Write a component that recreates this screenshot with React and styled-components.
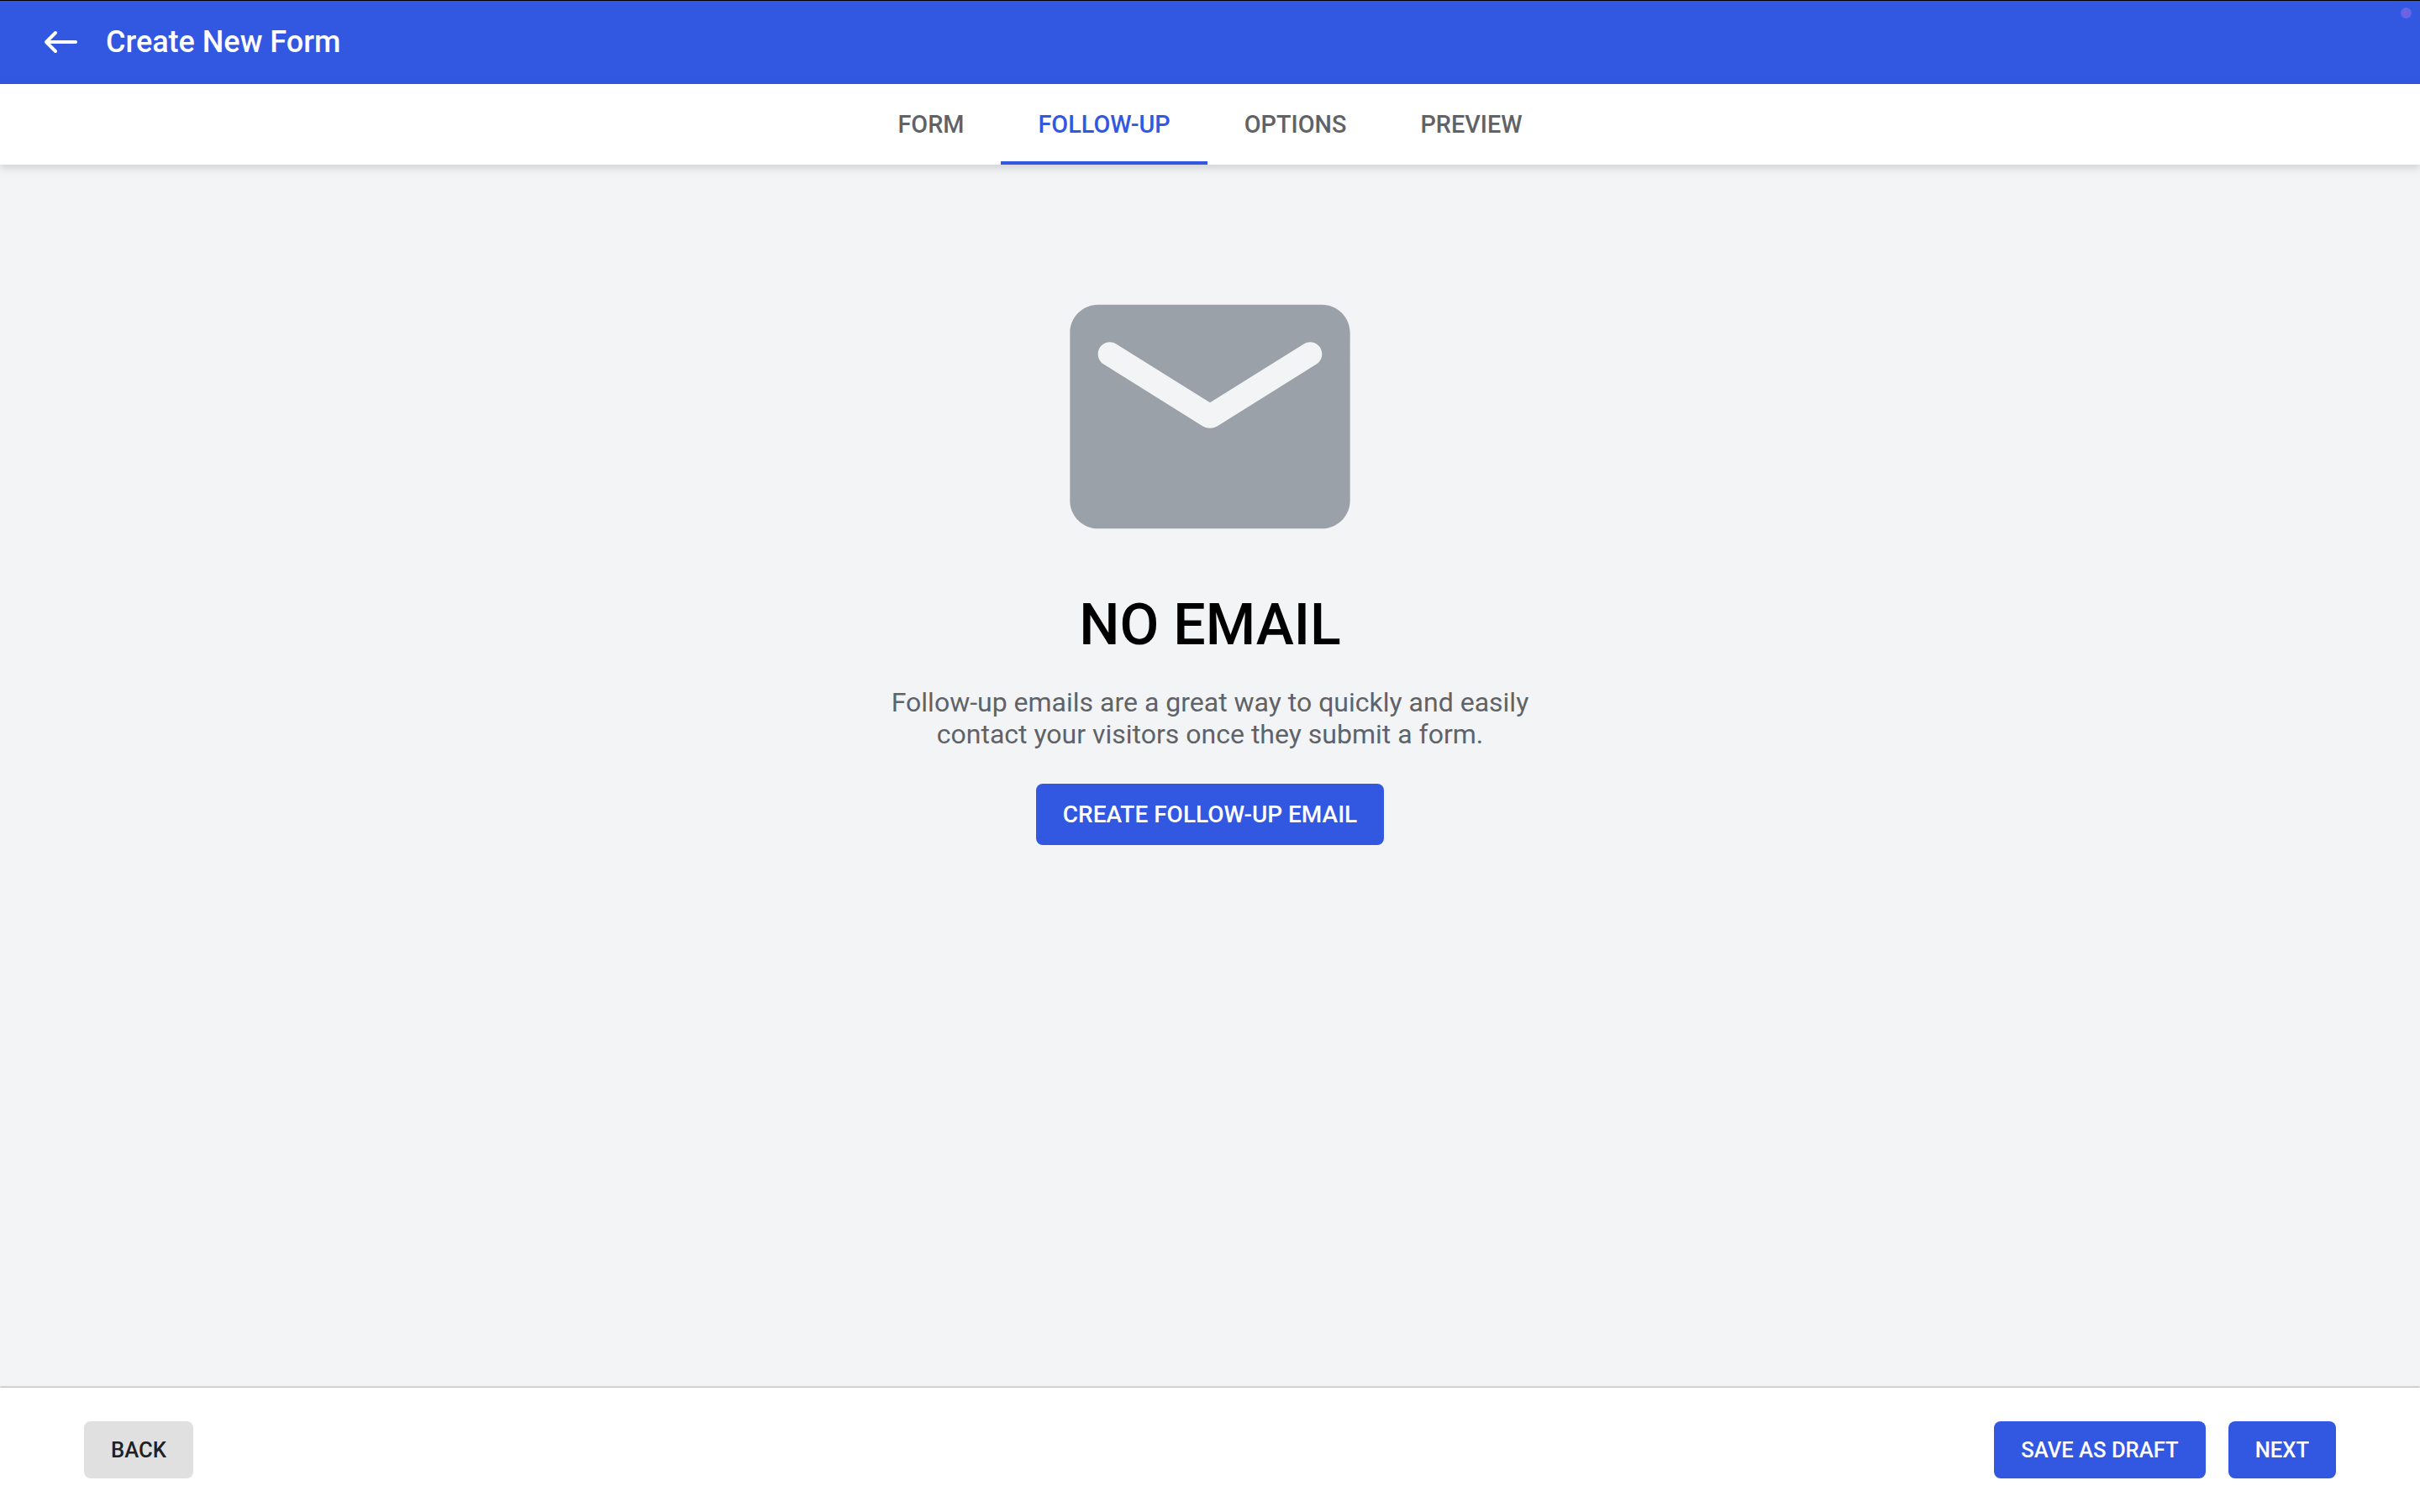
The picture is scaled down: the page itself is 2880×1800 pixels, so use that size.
import React, { useState } from 'react';
import styled, { createGlobalStyle } from 'styled-components';

const TABS = ['Form', 'Follow-up', 'Options', 'Preview'];

const App = () => {
  const [activeTab, setActiveTab] = useState('Follow-up');

  return (
    <>
      <GlobalStyle />
      <Page>
        <Header>
          <BackArrow viewBox="0 0 40 28">
            <path d="M14 3L3 14L14 25M3.5 14H38" />
          </BackArrow>
          <HeaderTitle>Create New Form</HeaderTitle>
          <StatusDot />
        </Header>
        <TabBar>
          {TABS.map(tab => (
            <Tab
              key={tab}
              $active={tab === activeTab}
              onClick={() => setActiveTab(tab)}
            >
              {tab}
            </Tab>
          ))}
        </TabBar>
        <Content>
          <MailIcon viewBox="0 0 24 24">
            <path d="M20 4H4c-1.1 0-2 .9-2 2v12c0 1.1.9 2 2 2h16c1.1 0 2-.9 2-2V6c0-1.1-.9-2-2-2zm-.4 4.25l-7.07 4.42c-.32.2-.74.2-1.06 0L4.4 8.25c-.25-.16-.4-.43-.4-.72 0-.67.73-1.07 1.3-.72L12 11l6.7-4.19c.57-.35 1.3.05 1.3.72 0 .29-.15.56-.4.72z" />
          </MailIcon>
          <EmptyTitle>No Email</EmptyTitle>
          <EmptyText>
            Follow-up emails are a great way to quickly and easily
            <br />
            contact your visitors once they submit a form.
          </EmptyText>
          <Button $large>Create Follow-up Email</Button>
        </Content>
        <Footer>
          <Button $secondary>Back</Button>
          <FooterActions>
            <Button>Save as Draft</Button>
            <Button>Next</Button>
          </FooterActions>
        </Footer>
      </Page>
    </>
  );
};
export default App;

const GlobalStyle = createGlobalStyle`
  * {
    box-sizing: border-box;
  }

  body {
    margin: 0;
    font-family: Roboto, sans-serif;
    background-color: #f3f4f6;
  }
`;

const Page = styled.div`
  display: flex;
  flex-direction: column;
  height: 100vh;
  overflow: hidden;
`;

const Header = styled.header`
  position: relative;
  display: flex;
  align-items: center;
  gap: 34px;
  height: 100px;
  padding: 0 52px 1px;
  border-top: 1px solid #000;
  background-color: #3257e0;
`;

const BackArrow = styled.svg`
  width: 40px;
  height: 28px;
  fill: none;
  stroke: #fff;
  stroke-width: 4;
  stroke-linecap: round;
  stroke-linejoin: round;
`;

const HeaderTitle = styled.h1`
  margin: 0;
  color: #fff;
  font-size: 36px;
  font-weight: 500;
  line-height: 42px;
`;

const StatusDot = styled.span`
  position: absolute;
  top: 8px;
  right: 10px;
  width: 13px;
  height: 13px;
  border-radius: 50%;
  background-color: #6a63e6;
`;

const TabBar = styled.nav`
  position: relative;
  z-index: 1;
  display: flex;
  justify-content: center;
  height: 96px;
  background-color: #fff;
  box-shadow: 0 4px 10px rgba(0, 0, 0, 0.15);
`;

const Tab = styled.button`
  padding: 4px 44px 0;
  border: none;
  border-bottom: 4px solid ${props => (props.$active ? '#3257e0' : 'transparent')};
  background: none;
  color: ${props => (props.$active ? '#3257e0' : '#5f6368')};
  font-family: inherit;
  font-size: 28.8px;
  font-weight: 500;
  text-transform: uppercase;
  cursor: pointer;
`;

const Content = styled.main`
  display: flex;
  flex: 1;
  flex-direction: column;
  align-items: center;
  padding-top: 100px;
`;

const MailIcon = styled.svg`
  width: 400px;
  height: 400px;
  fill: #9aa1a9;
`;

const EmptyTitle = styled.h2`
  margin: 8px 0 0;
  color: #000;
  font-size: 68px;
  font-weight: 500;
  line-height: 80px;
  text-transform: uppercase;
`;

const EmptyText = styled.p`
  margin: 33px 0 40px;
  color: #5f6368;
  font-size: 32px;
  line-height: 38px;
  text-align: center;
`;

const Button = styled.button`
  height: ${props => (props.$large ? '73px' : '68px')};
  padding: 0 32px;
  border: none;
  border-radius: 8px;
  background-color: ${props => (props.$secondary ? '#e0e0e0' : '#3257e0')};
  color: ${props => (props.$secondary ? '#202124' : '#fff')};
  font-family: inherit;
  font-size: ${props => (props.$large ? '28px' : '25.6px')};
  font-weight: 500;
  text-transform: uppercase;
  cursor: pointer;
`;

const Footer = styled.footer`
  display: flex;
  align-items: flex-start;
  justify-content: space-between;
  height: 148px;
  padding: 40px 100px 0;
  background-color: #fff;
  box-shadow: 0 -1px 2px rgba(0, 0, 0, 0.3);
`;

const FooterActions = styled.div`
  display: flex;
  gap: 27px;
`;
